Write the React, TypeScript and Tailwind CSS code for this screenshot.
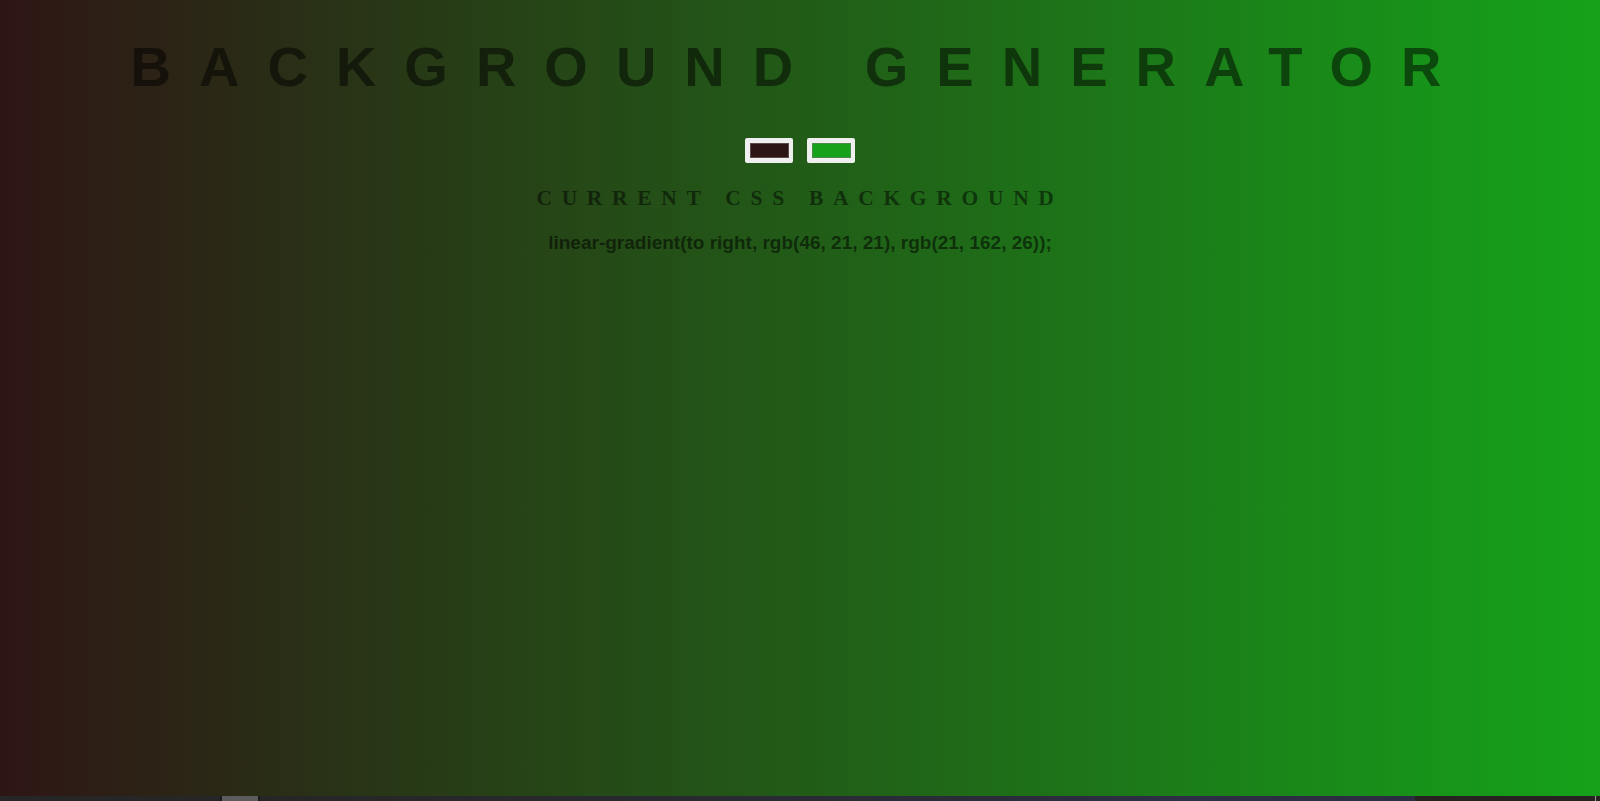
import React from "react";

export default function App() {
  return (
    <div className="flex h-[801px] w-full flex-col overflow-hidden">
      <div className="flex h-[796px] w-full flex-col items-center bg-[linear-gradient(to_right,rgb(46,21,21),rgb(21,162,26))]">
        <h1 className="mt-[39px] text-center font-['Liberation_Sans',Arial,sans-serif] text-[56px] font-bold uppercase leading-[56px] tracking-[28px] text-black/50">
          Background Generator
        </h1>
        <div className="mt-[43px] flex gap-[14px]">
          <div className="flex h-[25px] w-[48px] items-center justify-center rounded-[2px] bg-[#efefef]">
            <div className="h-[15px] w-[39px] border border-[#5a4a4a] bg-[rgb(46,21,21)]" />
          </div>
          <div className="flex h-[25px] w-[48px] items-center justify-center rounded-[2px] bg-[#efefef]">
            <div className="h-[15px] w-[39px] border border-[#4a8a4a] bg-[rgb(21,162,26)]" />
          </div>
        </div>
        <h3 className="mt-[25px] text-center font-['Liberation_Serif','Times_New_Roman',serif] text-[21.5px] font-bold uppercase leading-[21px] tracking-[9.7px] text-black/50">
          Current CSS Background
        </h3>
        <p className="mt-[24px] text-center font-['Liberation_Sans',Arial,sans-serif] text-[19px] font-bold leading-[19px] text-black/55">
          linear-gradient(to right, rgb(46, 21, 21), rgb(21, 162, 26));
        </p>
      </div>
      <div className="flex h-[5px] w-full">
        <div className="h-full w-[220px] bg-[#262626]" />
        <div className="h-full w-[2px] bg-[#1a1a1a]" />
        <div className="h-full w-[36px] bg-[#5c5c5c]" />
        <div className="h-full w-[2px] bg-[#1a1a1a]" />
        <div className="h-full flex-1 bg-[linear-gradient(to_right,#262626,#2a2c38_60%,#2d2f46_80%,#2b2d40)]" />
        <div className="h-full w-[180px] bg-[#262320]" />
        <div className="h-full w-[1px] bg-[#9a9a9a]" />
        <div className="h-full w-[4px] bg-[#262320]" />
      </div>
    </div>
  );
}
